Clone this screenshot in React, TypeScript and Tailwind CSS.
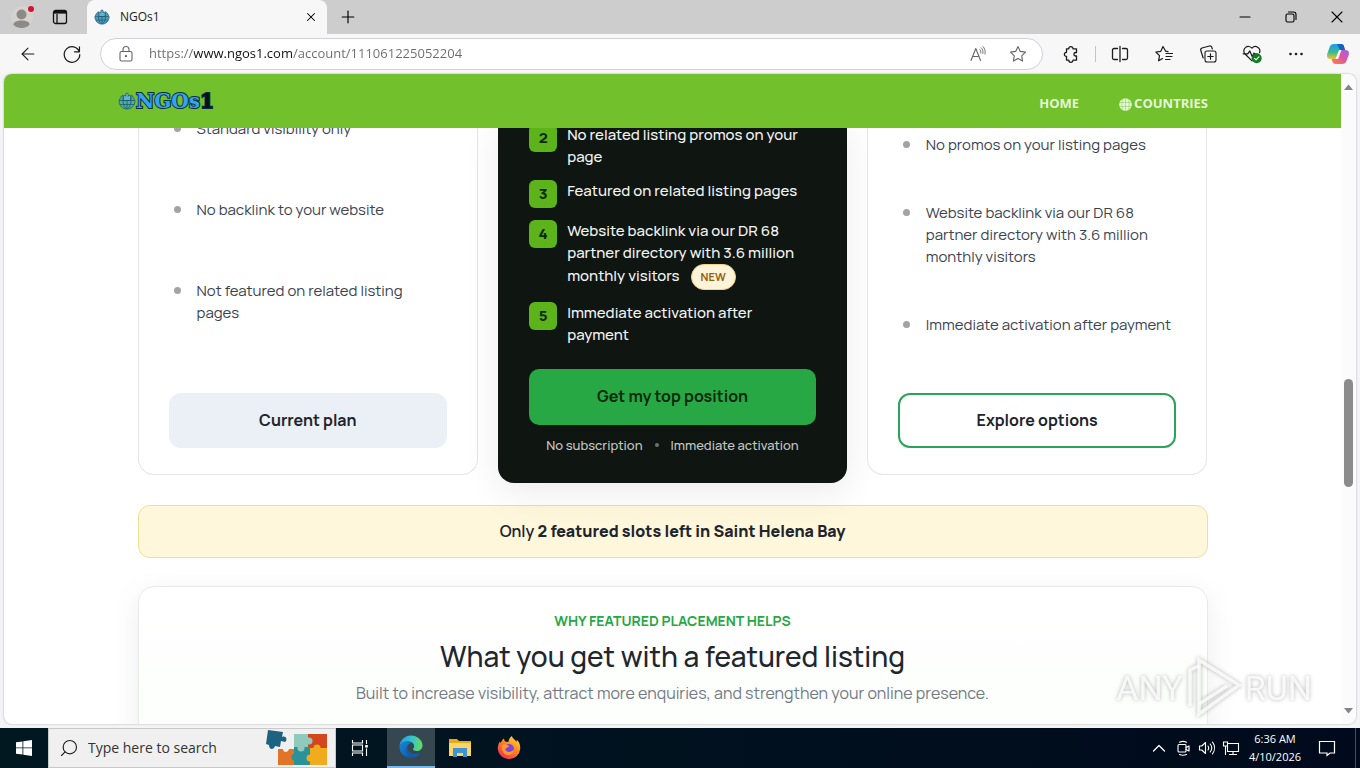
import React from 'react';
import type { ReactNode } from 'react';
import { ArrowLeft, Plus, Search, X } from 'lucide-react';

const basicFeatures = [
    'Standard visibility only',
    'No backlink to your website',
    'Not featured on related listing pages'
];

const topFeatures = [
    { rank: 2, text: 'No related listing promos on your page' },
    { rank: 3, text: 'Featured on related listing pages' },
    { rank: 4, text: 'Website backlink via our DR 68 partner directory with 3.6 million monthly visitors', isNew: true },
    { rank: 5, text: 'Immediate activation after payment' }
];

const otherFeatures = [
    'No promos on your listing pages',
    'Website backlink via our DR 68 partner directory with 3.6 million monthly visitors',
    'Immediate activation after payment'
];

const IconButton = ({ label, className = 'w-8 h-8', children }: { label: string; className?: string; children: ReactNode }) => (
    <button type="button" aria-label={label} className={`flex flex-none items-center justify-center ${className}`}>
        {children}
    </button>
);

const Line = ({ size = 18, children }: { size?: number; children: ReactNode }) => (
    <svg width={size} height={size} viewBox="0 0 18 18" fill="none" stroke="currentColor" strokeWidth="1.1" strokeLinecap="round" strokeLinejoin="round">
        {children}
    </svg>
);

const Globe = ({ size, fill }: { size: number; fill: string }) => (
    <svg width={size} height={size} viewBox="0 0 18 18" fill="none">
        <path d="M1 8.500h16c0 5-3.500 8.500-8 8.500s-8-3.500-8-8.500z" fill={fill} />
        <path d="M1.500 8.500c.3-2.500 1.500-4.200 3.500-5.500v5.500M16.500 8.500c-.3-2.500-1.500-4.200-3.500-5.500v5.500" fill={fill} stroke="#1d5a72" strokeWidth=".8" />
        <path d="M5.500 8.500V4.200a1.200 1.200 0 0 1 2.200 0V2.400a1.300 1.300 0 0 1 2.600 0v1.800a1.200 1.200 0 0 1 2.200 0v4.300z" fill="#62b4d0" stroke="#1d5a72" strokeWidth=".8" />
        <path d="M1 8.500h16c0 5-3.500 8.500-8 8.500s-8-3.500-8-8.500zM2.200 12.500h13.600M9 8.500V17M5 8.500c0 3.500 1 6 3 8M13 8.500c0 3.500-1 6-3 8" stroke="#1d5a72" strokeWidth=".8" />
    </svg>
);

const TabStrip = () => (
    <div className="flex h-[34px] flex-none items-stretch bg-[#cdcdcd]">
        <IconButton label="Profile" className="w-11">
            <svg width="24" height="24" viewBox="0 0 24 24">
                <circle cx="12" cy="12" r="11" fill="#d6d2cf" />
                <circle cx="11.500" cy="9.500" r="5" fill="#8d8986" />
                <path d="M3.500 19.500c0-3 4-4 8-4s8 1 8 4c-2 4.500-14 4.500-16 0z" fill="#8d8986" />
                <circle cx="21" cy="4" r="3" fill="#d8122d" />
            </svg>
        </IconButton>
        <IconButton label="Tab actions" className="w-8">
            <svg width="16" height="16" viewBox="0 0 16 16" fill="none" stroke="#111" strokeWidth="1.300">
                <rect x="1.500" y="1.500" width="13" height="13" rx="2" />
                <path d="M2 3.200h12" strokeWidth="2.800" />
                <path d="M5 5v9" />
            </svg>
        </IconButton>
        <div className="ml-[11px] flex w-60 items-center rounded-t-lg bg-[#f7f7f7] pl-[7px] pr-1">
            <Globe size={16} fill="#4d9fc0" />
            <span className="ml-[10px] flex-1 text-xs text-[#1b1b1b]">NGOs1</span>
            <IconButton label="Close tab" className="h-6 w-6"><X className="h-3.5 w-3.5 text-black" strokeWidth={1.8} /></IconButton>
        </div>
        <IconButton label="New tab" className="w-[42px]"><Plus className="h-5 w-5 text-black" strokeWidth={1.4} /></IconButton>
        <div className="ml-auto flex">
            <IconButton label="Minimize" className="w-[46px]"><Line><path d="M4 9h10" stroke="#000" /></Line></IconButton>
            <IconButton label="Restore" className="w-[46px]">
                <Line>
                    <rect x="4" y="6" width="8" height="8" rx="1.500" />
                    <path d="M6.500 4h5a2.500 2.500 0 0 1 2.500 2.500v5" />
                </Line>
            </IconButton>
            <IconButton label="Close" className="w-[46px]"><Line><path d="M4 4l10 10M14 4L4 14" stroke="#000" /></Line></IconButton>
        </div>
    </div>
);

const Toolbar = () => (
    <div className="flex h-10 flex-none items-center bg-[#f7f7f7] pl-3 pr-2 text-[#1b1b1b]">
        <IconButton label="Back"><ArrowLeft className="h-5 w-5" strokeWidth={1.3} /></IconButton>
        <IconButton label="Refresh" className="ml-3 h-8 w-8">
            <Line size={20}><path d="M15.500 6.800A7 7 0 1 0 16 9.500M15.700 2.500v4.500h-4.500" /></Line>
        </IconButton>
        <div className="ml-3 flex h-8 flex-1 items-center rounded-full border border-[#d0d0da] bg-white pl-4 pr-2 text-[#666]">
            <Line>
                <rect x="3" y="6.500" width="12" height="9.500" rx="1.500" />
                <path d="M6 6.500V4.500a3 3 0 0 1 6 0v2" />
                <circle cx="9" cy="11.200" r=".6" fill="currentColor" />
            </Line>
            <input
                aria-label="Address"
                readOnly
                value="https://www.ngos1.com/account/111061225052204"
                className="ml-[14px] min-w-0 flex-1 bg-[linear-gradient(90deg,#6b6b6b_45px,#111_45px,#111_143px,#6b6b6b_143px)] bg-clip-text text-[13px] text-transparent outline-none"
            />
            <IconButton label="Read aloud">
                <Line>
                    <path d="M2 15.500L6.800 3.500l4.800 12M3.600 11.500h6.400" />
                    <path d="M10.800 4.500c.9.900 1.200 2 1 3.500M12.300 2.800c1.500 1.500 2 3.500 1.500 5.700M14 1.500c2 2 2.500 4.500 2 7.500" strokeWidth=".9" />
                </Line>
            </IconButton>
            <IconButton label="Add to favorites" className="ml-2 h-8 w-8">
                <Line><path d="M9 1.500l2.300 4.900 5.200.7-3.800 3.700.9 5.300L9 13.600l-4.600 2.500.9-5.300L1.500 7.100l5.200-.7z" /></Line>
            </IconButton>
        </div>
        <IconButton label="Extensions" className="ml-3 h-8 w-8">
            <Line>
                <path d="M4.500 3.800h2.300a2.100 2.100 0 1 1 4.200 0h3.500v3.700h-.8a1.700 1.700 0 0 0 0 3.500h.8v4.200H11a2.100 2.100 0 1 1-4.200 0H4.500v-3.700a2.100 2.100 0 1 1 0-4.200z" strokeWidth="1.300" />
            </Line>
        </IconButton>
        <div className="mx-2 h-4 w-px bg-[#c4c4c4]" />
        <div className="flex gap-3">
            <IconButton label="Split screen">
                <Line><path d="M9 1.500v15M6.500 3.500H3a1.500 1.500 0 0 0-1.500 1.500v8A1.500 1.500 0 0 0 3 14.500h3.500M11.500 3.500H15A1.500 1.500 0 0 1 16.500 5v8a1.500 1.500 0 0 1-1.500 1.500h-3.500" strokeWidth="1.300" /></Line>
            </IconButton>
            <IconButton label="Favorites">
                <Line><path d="M10.500 6L8 1.500 5.800 6.300.8 7l3.700 3.600-.9 5.200L7.500 13.500M11 8.500h6.500M11 11.500h6M10.500 14.500h4.500M10.500 6.200l2.500.4" strokeWidth="1.200" /></Line>
            </IconButton>
            <IconButton label="Collections">
                <Line>
                    <rect x="6" y="6" width="11" height="11" rx="2" />
                    <path d="M11.500 8.800v5.400M8.800 11.500h5.400M4.200 13L1.800 5.500A2 2 0 0 1 3 3l7.500-2a2 2 0 0 1 2.400 1.500l.4 1.500" strokeWidth="1.200" />
                </Line>
            </IconButton>
            <IconButton label="Browser essentials">
                <Line size={20}>
                    <path d="M9 15.200L2.500 8.800A4 4 0 0 1 9 3.800a4 4 0 0 1 6.800 4M1 8.800h4.200l1.800-2.600 2.200 5 1.600-3 1.200 1h1.500" />
                    <circle cx="13.200" cy="12.800" r="4.500" fill="#107c22" stroke="none" />
                    <path d="M11.300 12.900l1.400 1.400 2.500-2.700" stroke="#fff" />
                </Line>
            </IconButton>
            <IconButton label="Settings and more">
                <Line>
                    <g fill="currentColor" stroke="none">
                        <circle cx="3.500" cy="9" r="1.300" />
                        <circle cx="9" cy="9" r="1.300" />
                        <circle cx="14.500" cy="9" r="1.300" />
                    </g>
                </Line>
            </IconButton>
            <IconButton label="Copilot" className="h-8 w-7">
                <svg width="24" height="24" viewBox="0 0 24 24">
                    <defs>
                        <linearGradient id="cpLeft" x1="0" y1="0" x2="0" y2="1">
                            <stop stopColor="#1b9cf0" />
                            <stop offset=".55" stopColor="#3bb98f" />
                            <stop offset="1" stopColor="#f2c230" />
                        </linearGradient>
                        <linearGradient id="cpRight" x1="1" y1="0" x2="0" y2="1">
                            <stop stopColor="#9a62ee" />
                            <stop offset=".5" stopColor="#e4559a" />
                            <stop offset="1" stopColor="#fb8a3c" />
                        </linearGradient>
                    </defs>
                    <path d="M8 2h7c2 0 2.600 1 3.100 2.700L19 8h-3c-2 0-3 .8-3.600 2.600L10.500 17H4.500C1 17 .6 14 1.400 11.500L3.500 5.500C4.300 3 5.500 2 8 2z" fill="url(#cpLeft)" />
                    <path d="M11 2h4c2 0 2.600 1 3.100 2.700L19 8h-5z" fill="#1760c4" />
                    <path d="M16 22H9.500c-2 0-2.700-1-3.200-2.700L5.600 17H8c2 0 3-.8 3.600-2.600L13.500 8h6c3.500 0 3.900 3 3.100 5.500l-2.100 5.300C19.600 21 18.500 22 16 22z" fill="url(#cpRight)" />
                    <path d="M13 8h2.500l-3.300 9H9.500z" fill="#fff" opacity=".9" />
                </svg>
            </IconButton>
        </div>
    </div>
);

const SiteHeader = () => (
    <header className="relative z-10 h-[54px] flex-none bg-[#72c02c] px-[114px]">
        <div className="mx-auto flex h-full max-w-[1110px] items-center justify-between">
            <a href="#home" className="flex items-center">
                <Globe size={18} fill="#4fae9a" />
                <span className="font-['DejaVu_Serif',serif] text-xl font-bold leading-6 text-[#35a3ef] [paint-order:stroke] [-webkit-text-stroke:2px_#0b2c44]">
                    NGOs<span className="text-[#06121c]">1</span>
                </span>
            </a>
            <nav className="flex items-center gap-10 pr-[19px] pt-[6px] text-[13px] font-bold text-[#e6f6d8]">
                <a href="#home">HOME</a>
                <a href="#countries" className="flex items-center gap-[2px]">
                    <svg width="13" height="13" viewBox="0 0 13 13">
                        <circle cx="6.500" cy="6.500" r="6.300" fill="#e6f6d8" />
                        <path d="M.5 4.500h12M.5 8.500h12M6.500.5v12M4 1C2.500 4 2.500 9 4 12M9 1c1.500 3 1.500 8 0 11" fill="none" stroke="#72c02c" strokeWidth=".4" />
                    </svg>
                    COUNTRIES
                </a>
            </nav>
        </div>
    </header>
);

const BulletList = ({ items, className }: { items: string[]; className: string }) => (
    <ul className={`flex flex-col pl-[5px] text-[15px] leading-[22px] text-[#3b4351] ${className}`}>
        {items.map((item) => (
            <li key={item} className="flex gap-4">
                <span className="mt-[7px] h-[7px] w-[7px] flex-none rounded-full bg-[#a3a3a3]" />
                <span>{item}</span>
            </li>
        ))}
    </ul>
);

const Plans = () => (
    <section className="-mt-[10px] grid grid-cols-[340fr_348fr_340fr] gap-5">
        <div className="mb-2 flex flex-col rounded-b-2xl border border-t-0 border-[#e3e5e8] bg-white px-[30px] pb-[26px]">
            <BulletList items={basicFeatures} className="gap-[59px]" />
            <button type="button" className="mt-auto h-[55px] rounded-xl bg-[#ebeff6] pb-[2px] text-base font-bold text-[#20242c]">Current plan</button>
        </div>

        <div className="flex flex-col rounded-b-2xl bg-[#0f1511] px-[31px] pb-[27px] pt-[6px] shadow-[0_10px_36px_rgba(0,0,0,0.08)]">
            <ol className="flex flex-col gap-3 text-[15px] font-medium leading-[22px] text-[#f1f4f2]">
                {topFeatures.map((feature) => (
                    <li key={feature.rank} className="flex items-start gap-[10px]">
                        <span className="flex h-7 w-7 flex-none items-center justify-center rounded-md bg-[#5cb31a] font-extrabold text-[#0c2a08]">{feature.rank}</span>
                        <span>
                            {feature.text}
                            {feature.isNew && (
                                <span className="ml-[11px] inline-flex h-[26px] items-center rounded-full border border-[#f3d28c] bg-[#fff3d9] px-[9px] align-middle text-[11px] font-bold leading-4 text-[#8f6212]">NEW</span>
                            )}
                        </span>
                    </li>
                ))}
            </ol>
            <button type="button" className="mt-[23px] h-14 rounded-[10px] bg-[#28a745] pb-[2px] text-base font-bold text-[#0a2a0c]">Get my top position</button>
            <p className="mt-[9px] flex items-center justify-center gap-3 text-[13px] font-medium leading-[22px] text-[#c3c8c4]">
                No subscription
                <span className="h-1 w-1 rounded-full bg-[#6d736f]" />
                Immediate activation
            </p>
        </div>

        <div className="mb-2 flex flex-col rounded-b-2xl border border-t-0 border-[#e3e5e8] bg-white px-[30px] pb-[26px] pt-4">
            <BulletList items={otherFeatures} className="gap-[46px]" />
            <button type="button" className="mt-auto h-[55px] rounded-xl border-2 border-[#2ba35c] bg-white pb-[2px] text-base font-bold text-[#20242c]">Explore options</button>
        </div>
    </section>
);

const Watermark = () => (
    <div className="pointer-events-none absolute bottom-1 right-11 z-20 flex items-center gap-[2px] font-['Roboto',sans-serif] text-[34px] leading-[64px] text-white/80 [filter:drop-shadow(0_0_2px_rgba(0,0,0,0.35))]">
        <span>ANY</span>
        <svg width="58" height="64" viewBox="0 0 58 64" fill="none" stroke="currentColor" strokeWidth="3.500">
            <path d="M14 4l40 25-40 29z" />
            <path d="M14 10L5 14v36M14 48l28-18" />
        </svg>
        <span>RUN</span>
    </div>
);

const Page = () => (
    <div className="relative mx-1 flex min-h-0 flex-1 overflow-hidden rounded-lg bg-white shadow-[0_0_2px_rgba(0,0,0,0.35)]">
        <div className="flex min-w-0 flex-1 flex-col overflow-hidden">
            <SiteHeader />
            <main className="mx-auto w-full max-w-[1070px] min-h-0 flex-1 font-['Manrope','Inter',sans-serif]">
                <Plans />
                <p className="mt-[22px] rounded-xl border border-[#eedf93] bg-[#fff7dc] py-[14px] text-center text-base leading-[23px] font-semibold text-[#20242c]">
                    Only <strong className="font-extrabold">2 featured slots left in Saint Helena Bay</strong>
                </p>
                <section className="mt-7 h-[420px] rounded-2xl border border-[#e7e9eb] bg-linear-to-b from-white to-[#f4fdf2] px-8 pt-[23px] text-center shadow-[0_8px_32px_rgba(0,0,0,0.07)]">
                    <p className="text-sm font-bold leading-[22px] text-[#28a745]">WHY FEATURED PLACEMENT HELPS</p>
                    <h2 className="mt-1 text-[28px] font-medium leading-10 text-[#20262f]">What you get with a featured listing</h2>
                    <p className="mt-[3px] text-base leading-7 text-[#727a86]">
                        Built to increase visibility, attract more enquiries, and strengthen your online presence.
                    </p>
                </section>
            </main>
        </div>
        <div className="flex w-[15px] flex-none flex-col items-center bg-[#fbfbfb] py-[9px]">
            <svg width="9" height="8" viewBox="0 0 9 8"><path d="M4.500 1.500L9 7H0z" fill="#858585" /></svg>
            <div className="flex w-full flex-1 flex-col items-center">
                <div className="grow-[288]" />
                <div className="w-[9px] grow-[108] rounded-full bg-[#8b8b8b]" />
                <div className="grow-[220]" />
            </div>
            <svg width="9" height="8" viewBox="0 0 9 8"><path d="M4.500 6.500L9 1H0z" fill="#858585" /></svg>
        </div>
        <Watermark />
    </div>
);

const Taskbar = () => (
    <footer className="flex h-10 flex-none items-stretch bg-linear-to-r from-[#011821] to-[#000a1c] text-white">
        <IconButton label="Start" className="w-12">
            <svg width="16" height="16" viewBox="0 0 16 16" fill="#fff"><path d="M0 2.300L6.500 1.400v6.100H0zM7.300 1.300L16 0v7.500H7.300zM0 8.300h6.500v6.300L0 13.700zM7.300 8.300H16V16l-8.700-1.300z" /></svg>
        </IconButton>
        <label className="flex w-72 items-center border border-[#c9c9c9] bg-[#f0f0f0] pl-[10px] pr-[6px]">
            <Search className="h-5 w-5 -scale-x-100 text-[#222]" strokeWidth={1.4} />
            <input aria-label="Search" placeholder="Type here to search" className="ml-[9px] w-[160px] bg-transparent text-sm text-[#222] outline-none placeholder:text-[#333]" />
            <svg className="ml-auto" width="64" height="38" viewBox="0 0 64 38">
                <path d="M29 5h14v13H29z" fill="#8fcabd" />
                <path d="M43 5h19v15H43z" fill="#d3461e" />
                <path d="M13 20h18v16H13z" fill="#e07428" />
                <path d="M29 18h16v18H29z" fill="#2a9298" />
                <path d="M45 19h17v17H45z" fill="#f0ac1e" />
                <circle cx="44" cy="12" r="3.500" fill="#8fcabd" />
                <circle cx="36" cy="19" r="3.500" fill="#8fcabd" />
                <circle cx="30" cy="28" r="3.500" fill="#2a9298" />
                <circle cx="52" cy="19" r="3.500" fill="#f0ac1e" />
                <circle cx="45" cy="29" r="3.500" fill="#f0ac1e" />
                <path d="M3 1l15 2-1 5c4-2 6 3 3 5l-4-1-1 6-5-1c-1 4-6 4-6-1l-3-1z" fill="#1d6381" />
                <path d="M13 20h5c0 4 5 4 6 0h-2v-5h-4z" fill="#f0f0f0" />
            </svg>
        </label>
        <IconButton label="Task view" className="w-12">
            <svg width="18" height="18" viewBox="0 0 18 18" fill="none" stroke="#fff" strokeWidth="1.100">
                <path d="M1.500 1v3h10V1M1.500 17v-3h10v3M1.500 6h10v6h-10zM15.500 1v4M15.500 9.500V17" />
                <path d="M14.200 6h2.600v2.600h-2.600z" fill="#fff" stroke="none" />
            </svg>
        </IconButton>
        <IconButton label="Microsoft Edge" className="ml-[3px] w-12 border-b-2 border-[#76b9ed] bg-[#36474f]">
            <svg width="24" height="24" viewBox="0 0 24 24">
                <defs>
                    <linearGradient id="edgeTop" x1="0" y1=".4" x2="1" y2=".5">
                        <stop stopColor="#1b9de2" />
                        <stop offset=".5" stopColor="#35c1d0" />
                        <stop offset="1" stopColor="#66df5a" />
                    </linearGradient>
                    <linearGradient id="edgeBase" x1="0" y1="0" x2="1" y2="1">
                        <stop stopColor="#1787d8" />
                        <stop offset="1" stopColor="#0d4f9f" />
                    </linearGradient>
                </defs>
                <path d="M.5 11C1 5 6 .5 12 .5S23.500 5 23.500 10.500c0 3.500-2.700 5.500-5.700 5.500-2.300 0-3.800-.7-3.800-1.700 0-.8 1.200-1.300 1.200-3C15.200 8.500 12.500 6.500 9 6.500 5 6.500 1.500 8.500.5 11z" fill="url(#edgeTop)" />
                <path d="M.5 12c0-3 3.500-5.500 7.500-5.500 2.800 0 4.500 1.200 4.500 1.200C9.300 8.500 7.600 11 7.600 14c0 5 4.400 8.500 9 7.800C9.500 25.500.5 20.500.5 12z" fill="url(#edgeBase)" />
                <path d="M9.800 10c-2.700 3.500.2 9 6 9 2.500 0 4.600-.7 6-1.700-1.200 2.600-3.800 4.500-5.200 4.500C12 23 7.600 19 7.600 14c0-1.500.9-3 2.200-4z" fill="#125ca8" />
            </svg>
        </IconButton>
        <IconButton label="File Explorer" className="w-[49px]">
            <svg width="22" height="20" viewBox="0 0 22 20">
                <path d="M0 1h8l2 2h12v15H0z" fill="#e9a91f" />
                <path d="M0 5h22v13H0z" fill="#fbd667" />
                <path d="M4 10h14v9h-4v-4H8v4H4z" fill="#3f93d2" />
            </svg>
        </IconButton>
        <IconButton label="Firefox" className="w-[49px]">
            <svg width="24" height="24" viewBox="0 0 24 24">
                <defs>
                    <linearGradient id="fox" x1=".9" y1="0" x2=".2" y2="1">
                        <stop stopColor="#ffe24a" />
                        <stop offset=".45" stopColor="#ff8a1e" />
                        <stop offset="1" stopColor="#f0265f" />
                    </linearGradient>
                </defs>
                <path d="M15 0c0 2 3 3.500 4.500 6 .3-.8.2-1.700 0-2.500 3 2.500 4 6 3.700 9.500A11.300 11.300 0 0 1 .7 13c0-3 .8-5.500 2.300-7.500 0 0 .2 1 .6 1.600C4.500 5 5.500 3.500 7 2.500c0 1.500.7 2.500 2 3.500 1.500-.3 2.500 0 2.500 0C11.500 3.500 13 1 15 0z" fill="url(#fox)" />
                <circle cx="12" cy="13" r="5" fill="#7d45dc" />
                <path d="M5 9c3-1.500 5-.5 7 1-1 2-3.500 1.500-3.700 3.500.7 3 5.700 3.500 8.700 0 0 4-3.500 6-6.500 5.500C7 18.500 4 14 5 9z" fill="#ff9a26" />
            </svg>
        </IconButton>
        <div className="ml-auto flex items-center pr-1">
            <IconButton label="Show hidden icons" className="h-8 w-6"><Line><path d="M3.500 12L9 6.500l5.500 5.500" stroke="#fff" strokeWidth="1.300" /></Line></IconButton>
            <IconButton label="Meet now" className="h-8 w-6">
                <Line><rect x="4" y="5.500" width="8" height="7.500" rx="1" /><path d="M12 8.500l3-1.500v5l-3-1.500M5.500 3.200a9 9 0 0 1 7 0M5.500 15.500a9 9 0 0 0 7 0" strokeWidth="1.200" /></Line>
            </IconButton>
            <IconButton label="Volume" className="h-8 w-6">
                <Line><path d="M1.500 7h2.300L7.500 3.500v11L3.800 11H1.500zM10 7a3.500 3.500 0 0 1 0 4M12.200 5a6.500 6.500 0 0 1 0 8M14.500 3.200a9.500 9.500 0 0 1 0 11.600" /></Line>
            </IconButton>
            <IconButton label="Network" className="h-8 w-6">
                <Line><path d="M5.500 4.500h11v8h-11zM11 12.500v3M7.500 15.500h7M1.500 3h4v4h-4zM3.500 7v8.500" strokeLinejoin="miter" /></Line>
            </IconButton>
            <div className="w-16 text-center text-[11px] leading-[18px]">
                <div>6:36 AM</div>
                <div>4/10/2026</div>
            </div>
            <IconButton label="Notifications" className="h-8 w-10">
                <Line><path d="M1.500 2.500h15v11.500h-4.500l-3 2.500v-2.500h-7.500z" strokeWidth="1.200" strokeLinejoin="miter" /></Line>
            </IconButton>
            <div className="ml-2 h-10 w-px bg-[#47505c]" />
        </div>
    </footer>
);

export default function App() {
    return (
        <div className="flex h-screen flex-col overflow-hidden bg-[#f4f4f6] font-['Segoe_UI','Open_Sans',sans-serif]">
            <TabStrip />
            <Toolbar />
            <Page />
            <div className="h-1 flex-none" />
            <Taskbar />
        </div>
    );
}
